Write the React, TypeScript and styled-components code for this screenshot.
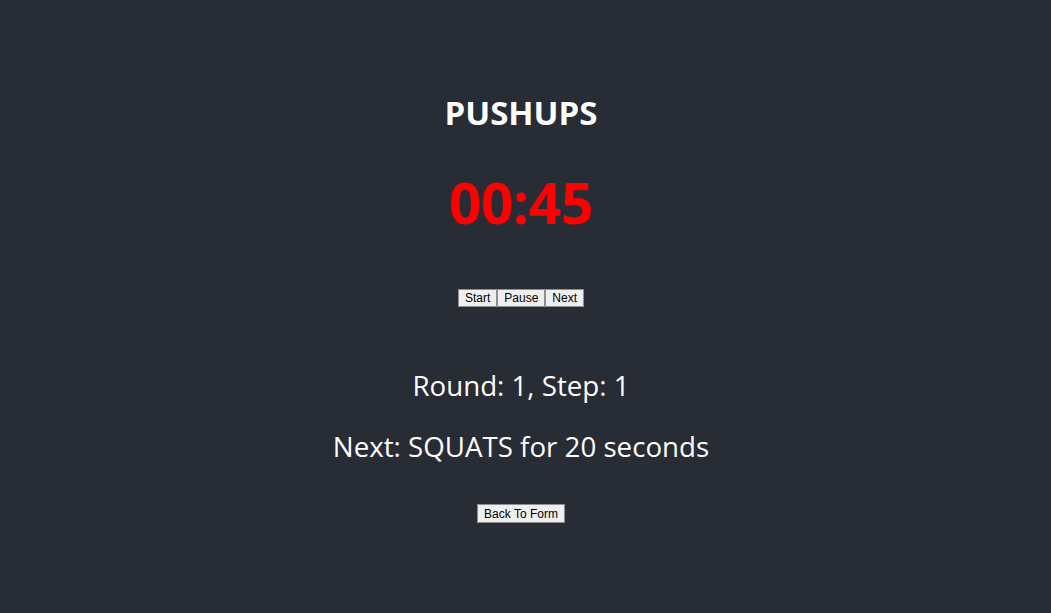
import React from "react";
import styled, { createGlobalStyle } from "styled-components";

const Global = createGlobalStyle`
  html, body { margin: 0; padding: 0; background: #282c34; }
  #root { min-height: 100vh; }
`;

const Screen = styled.div`
  min-height: 100vh;
  box-sizing: border-box;
  display: flex;
  flex-direction: column;
  align-items: center;
  background: #282c34;
  color: #ffffff;
  font-family: "Open Sans", "Noto Sans", sans-serif;
  padding-top: 94px;
  padding-right: 9px;
`;

const Exercise = styled.h2`
  margin: 0;
  font-size: 33px;
  font-weight: 700;
  line-height: 38px;
`;

const Timer = styled.div`
  margin-top: 35px;
  font-size: 57px;
  font-weight: 700;
  color: #ff0000;
  line-height: 70px;
  letter-spacing: -0.5px;
`;

const Controls = styled.div`
  margin-top: 52px;
  display: flex;
`;

const Btn = styled.button`
  font-family: "Liberation Sans", Arial, sans-serif;
  font-size: 12px;
  line-height: 14px;
  color: #000;
  background: #efefef;
  border: 1px solid #8f8f8f;
  border-radius: 0;
  padding: 1px 6px;
  margin: 0;
  height: 18px;
  box-sizing: border-box;
`;

const Info = styled.p`
  margin: 0;
  font-size: 27.7px;
  line-height: 34px;
`;

const RoundInfo = styled(Info)`
  margin-top: 61px;
`;

const NextInfo = styled(Info)`
  margin-top: 27px;
`;

const BackBtn = styled(Btn)`
  margin-top: 41px;
  height: 19px;
`;

export default function App() {
  return (
    <>
      <Global />
      <Screen>
        <Exercise>PUSHUPS</Exercise>
        <Timer>00:45</Timer>
        <Controls>
          <Btn>Start</Btn>
          <Btn>Pause</Btn>
          <Btn>Next</Btn>
        </Controls>
        <RoundInfo>Round: 1, Step: 1</RoundInfo>
        <NextInfo>Next: SQUATS for 20 seconds</NextInfo>
        <BackBtn>Back To Form</BackBtn>
      </Screen>
    </>
  );
}
